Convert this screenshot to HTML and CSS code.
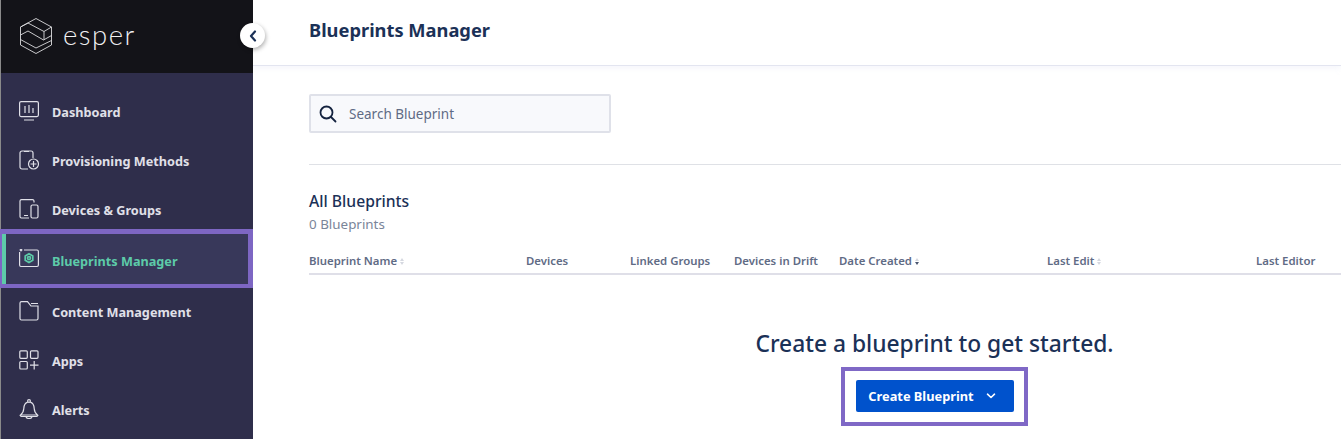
FILE: index.html
```html
<!DOCTYPE html>
<html lang="en">
<head>
<meta charset="utf-8">
<title>Blueprints Manager</title>
<link rel="stylesheet" href="styles.css">
</head>
<body>
<div class="app">
  <aside class="sidebar">
    <div class="brand">
      <svg class="logo" viewBox="0 0 32 36" fill="none" stroke="#dcdcdf" stroke-width=".9" stroke-linejoin="round">
        <path d="M16 .5 31.500 9V27L16 35.500 .5 27V9Z"/>
        <path d="M.5 9 8 5 24 13.500 31.500 9M24 13.500V22M.5 17 8 13 23.500 22 31.500 17.500M.5 21.500 16 30 31.500 22.500"/>
      </svg>
      <span class="wordmark">esper</span>
    </div>
    <nav class="nav">
      <a class="nav-item">
        <svg class="nav-icon" viewBox="0 0 20 20" fill="none" stroke="currentColor" stroke-width="1.200"><rect x=".6" y=".6" width="18.800" height="15" rx="1.500"/><path d="M5 19H15M6 5V12M10 4V12M14 7V12"/></svg>
        <span>Dashboard</span>
      </a>
      <a class="nav-item">
        <svg class="nav-icon" viewBox="0 0 20 20" fill="none" stroke="currentColor" stroke-width="1.200"><path d="M9 19H3A2 2 0 0 1 1 17V3A2 2 0 0 1 3 1H12A2 2 0 0 1 14 3V8M5 1.500H10"/><circle cx="14.500" cy="14" r="5"/><path d="M14.500 11V17M11.500 14H17.500"/></svg>
        <span>Provisioning Methods</span>
      </a>
      <a class="nav-item">
        <svg class="nav-icon" viewBox="0 0 20 20" fill="none" stroke="currentColor" stroke-width="1.200"><path d="M15 3.500V2A1.500 1.500 0 0 0 13.500 .6H2.500A1.500 1.500 0 0 0 1 2V17.500A1.500 1.500 0 0 0 2.500 19H10M5 16.500H9"/><rect x="12" y="6" width="7" height="13" rx="1.500"/></svg>
        <span>Devices &amp; Groups</span>
      </a>
      <a class="nav-item nav-item-active">
        <svg class="nav-icon" viewBox="0 0 20 20" fill="none" stroke="currentColor" stroke-width="1.200"><path d="M5 1H18A1.500 1.500 0 0 1 19.400 2.500V16A1.500 1.500 0 0 1 18 17.500H2A1.500 1.500 0 0 1 .6 16V3"/><circle cx="2" cy="1" r=".8"/><path class="gear" d="M10 4.800 13.800 7V11.200L10 13.400 6.200 11.200V7Z"/><circle class="gear" cx="10" cy="9.100" r="1.500"/></svg>
        <span>Blueprints Manager</span>
      </a>
      <a class="nav-item">
        <svg class="nav-icon" viewBox="0 0 20 20" fill="none" stroke="currentColor" stroke-width="1.200"><path d="M1 3V17.500A1.500 1.500 0 0 0 2.500 19H17.500A1.500 1.500 0 0 0 19 17.500V5H12L8.500 .6H2.500A1.500 1.500 0 0 0 1 2ZM12 2.500H19"/></svg>
        <span>Content Management</span>
      </a>
      <a class="nav-item">
        <svg class="nav-icon" viewBox="0 0 20 20" fill="none" stroke="currentColor" stroke-width="1.200"><rect x=".8" y=".8" width="7.500" height="7.500" rx="1"/><rect x="11.500" y=".8" width="7.500" height="7.500" rx="1"/><rect x=".8" y="11.500" width="7.500" height="7.500" rx="1"/><path d="M15.200 11V19.500M11 15.200H19.500"/></svg>
        <span>Apps</span>
      </a>
      <a class="nav-item">
        <svg class="nav-icon" viewBox="0 0 20 20" fill="none" stroke="currentColor" stroke-width="1.200"><circle cx="10" cy="2" r="1.400"/><path d="M8.800 3.200C5.500 4 5 6.500 4.800 9.500 4.600 12.500 3.500 14.500 1.500 16H18.500C16.500 14.500 15.400 12.500 15.200 9.500 15 6.500 14.500 4 11.200 3.200M1.500 16V16.800A1 1 0 0 0 2.500 17.500H17.500A1 1 0 0 0 18.500 16.800V16M7 17.500A3 2 0 0 0 13 17.500"/></svg>
        <span>Alerts</span>
      </a>
    </nav>
    <button class="collapse" type="button" aria-label="Collapse">
      <svg viewBox="0 0 8 12" fill="none" stroke="#1b3157" stroke-width="2.200" stroke-linecap="round" stroke-linejoin="round"><path d="M6 1.500 2 6 6 10.500"/></svg>
    </button>
  </aside>
  <main class="main">
    <header class="topbar"><h1>Blueprints Manager</h1></header>
    <div class="content">
      <label class="search">
        <svg viewBox="0 0 18 18" fill="none" stroke="#14233f" stroke-width="1.800" stroke-linecap="round"><circle cx="7.500" cy="7.500" r="6"/><path d="M12 12 16.500 16.500"/></svg>
        <span>Search Blueprint</span>
      </label>
      <hr class="rule">
      <h2>All Blueprints</h2>
      <p class="count">0 Blueprints</p>
      <div class="thead">
        <div>Blueprint Name<i class="sort"></i></div>
        <div>Devices</div>
        <div>Linked Groups</div>
        <div>Devices in Drift</div>
        <div>Date Created<i class="sort sort-down"></i></div>
        <div>Last Edit<i class="sort"></i></div>
        <div>Last Editor</div>
      </div>
      <section class="empty">
        <h3>Create a blueprint to get started.</h3>
        <div class="highlight">
          <button class="primary" type="button">Create Blueprint
            <svg viewBox="0 0 10 6" fill="none" stroke="#fff" stroke-width="1.600" stroke-linecap="round" stroke-linejoin="round"><path d="M1.500 1.200 5 4.500 8.500 1.200"/></svg>
          </button>
        </div>
      </section>
    </div>
  </main>
</div>
</body>
</html>
```
FILE: styles.css
```css
* { box-sizing: border-box; }
html, body { margin: 0; height: 439px; overflow: hidden; background: #fff; }
body { font-family: "Noto Sans", "Liberation Sans", sans-serif; color: #1b3157; }
.app { display: flex; height: 439px; width: 1341px; overflow: hidden; }

.sidebar { position: relative; flex: 0 0 253px; border-left: 1px solid #8a8a8a; background: #2f2e4b; z-index: 2; }
.brand { height: 73px; background: #131318; display: flex; align-items: center; padding-left: 19px; gap: 11px; }
.logo { width: 32px; height: 36px; margin-top: -1px; }
.wordmark { font-family: "Lato", sans-serif; font-weight: 300; font-size: 27.500px; letter-spacing: 1.500px; color: #f0f0f2; line-height: 1; margin-top: -4px; }

.nav { display: flex; flex-direction: column; padding-top: 14px; }
.nav-item { height: 49px; display: flex; align-items: center; padding-left: 18px; gap: 13px; color: #e0e0e8; font-size: 12.700px; font-weight: 700; }
.nav-icon { width: 20px; height: 20px; flex: none; margin-top: -2px; }
.nav-item-active { height: 59px; margin: -5px 0 -1px -1px; padding: 4px 0 0 17px; border: solid #7d66c3; border-width: 5px 5px 4px 2px; background: #38385a; color: #5dcba9; box-shadow: inset 4px 0 0 #5dcba9; }
.nav-item-active .nav-icon { color: #e0e0e8; margin-top: -5px; }
.nav-item-active .gear { stroke: #5dcba9; stroke-width: 1.700; }

.collapse { position: absolute; top: 23px; left: 239px; width: 25px; height: 25px; border: 0; border-radius: 50%; background: #fff; box-shadow: 1px 2px 4px rgba(0,0,0,.3); padding: 0; display: flex; align-items: center; justify-content: center; }
.collapse svg { width: 8px; height: 12px; }

.main { flex: 1; min-width: 0; }
.topbar { height: 66px; border-bottom: 1px solid #e3e5f0; box-shadow: 0 2px 6px rgba(210,216,240,.25); display: flex; align-items: center; padding-left: 56px; }
h1 { margin: 0 0 6px; font-size: 18.300px; font-weight: 700; color: #1b3157; }
.content { padding: 28px 0 0 56px; }
.search { width: 302px; height: 39px; border: 2px solid #dfe1e9; border-radius: 2px; background: #f8f9fc; display: flex; align-items: center; gap: 12px; padding-left: 8px; color: #5f6b85; font-size: 13.500px; }
.search svg { width: 18px; height: 18px; flex: none; }
.rule { margin: 31px 0 0; border: 0; border-top: 1px solid #dfe1e6; }
h2 { margin: 26px 0 0; font-size: 15.700px; font-weight: 500; line-height: 20px; color: #1b3157; }
.count { margin: 4px 0 0; font-size: 13.400px; line-height: 19px; color: #7a8599; }
.thead { display: grid; grid-template-columns: 217px 104px 104px 105px 208px 209px 1fr; height: 33px; margin-top: 8px; padding-top: 11px; border-bottom: 2px solid #dfdfe8; font-size: 11.400px; line-height: 16px; font-weight: 600; color: #5f6b85; }
.sort { display: inline-block; vertical-align: middle; margin-left: 3px; width: 5px; height: 7px; position: relative; }
.sort::before, .sort::after { content: ""; position: absolute; left: 0; border-left: 2.500px solid transparent; border-right: 2.500px solid transparent; }
.sort::before { top: 0; border-bottom: 3px solid #d5d8e0; }
.sort::after { bottom: 0; border-top: 3px solid #d5d8e0; }
.sort-down::after { border-top-color: #4a5670; }

.empty { width: 1251px; display: flex; flex-direction: column; align-items: center; padding-top: 53px; }
h3 { margin: 0; font-size: 22.800px; font-weight: 500; line-height: 32px; color: #1b3157; }
.highlight { margin-top: 7px; padding: 9px 10px 10px 11px; border: 4px solid #7f68c6; background: #fff; }
.primary { width: 158px; height: 32px; border: 0; border-radius: 2px; background: #0052cc; color: #fff; font: 700 12.800px "Noto Sans", sans-serif; display: flex; align-items: center; justify-content: center; gap: 12px; padding: 0 6px 0 0; }
.primary svg { width: 10px; height: 6px; }
```
